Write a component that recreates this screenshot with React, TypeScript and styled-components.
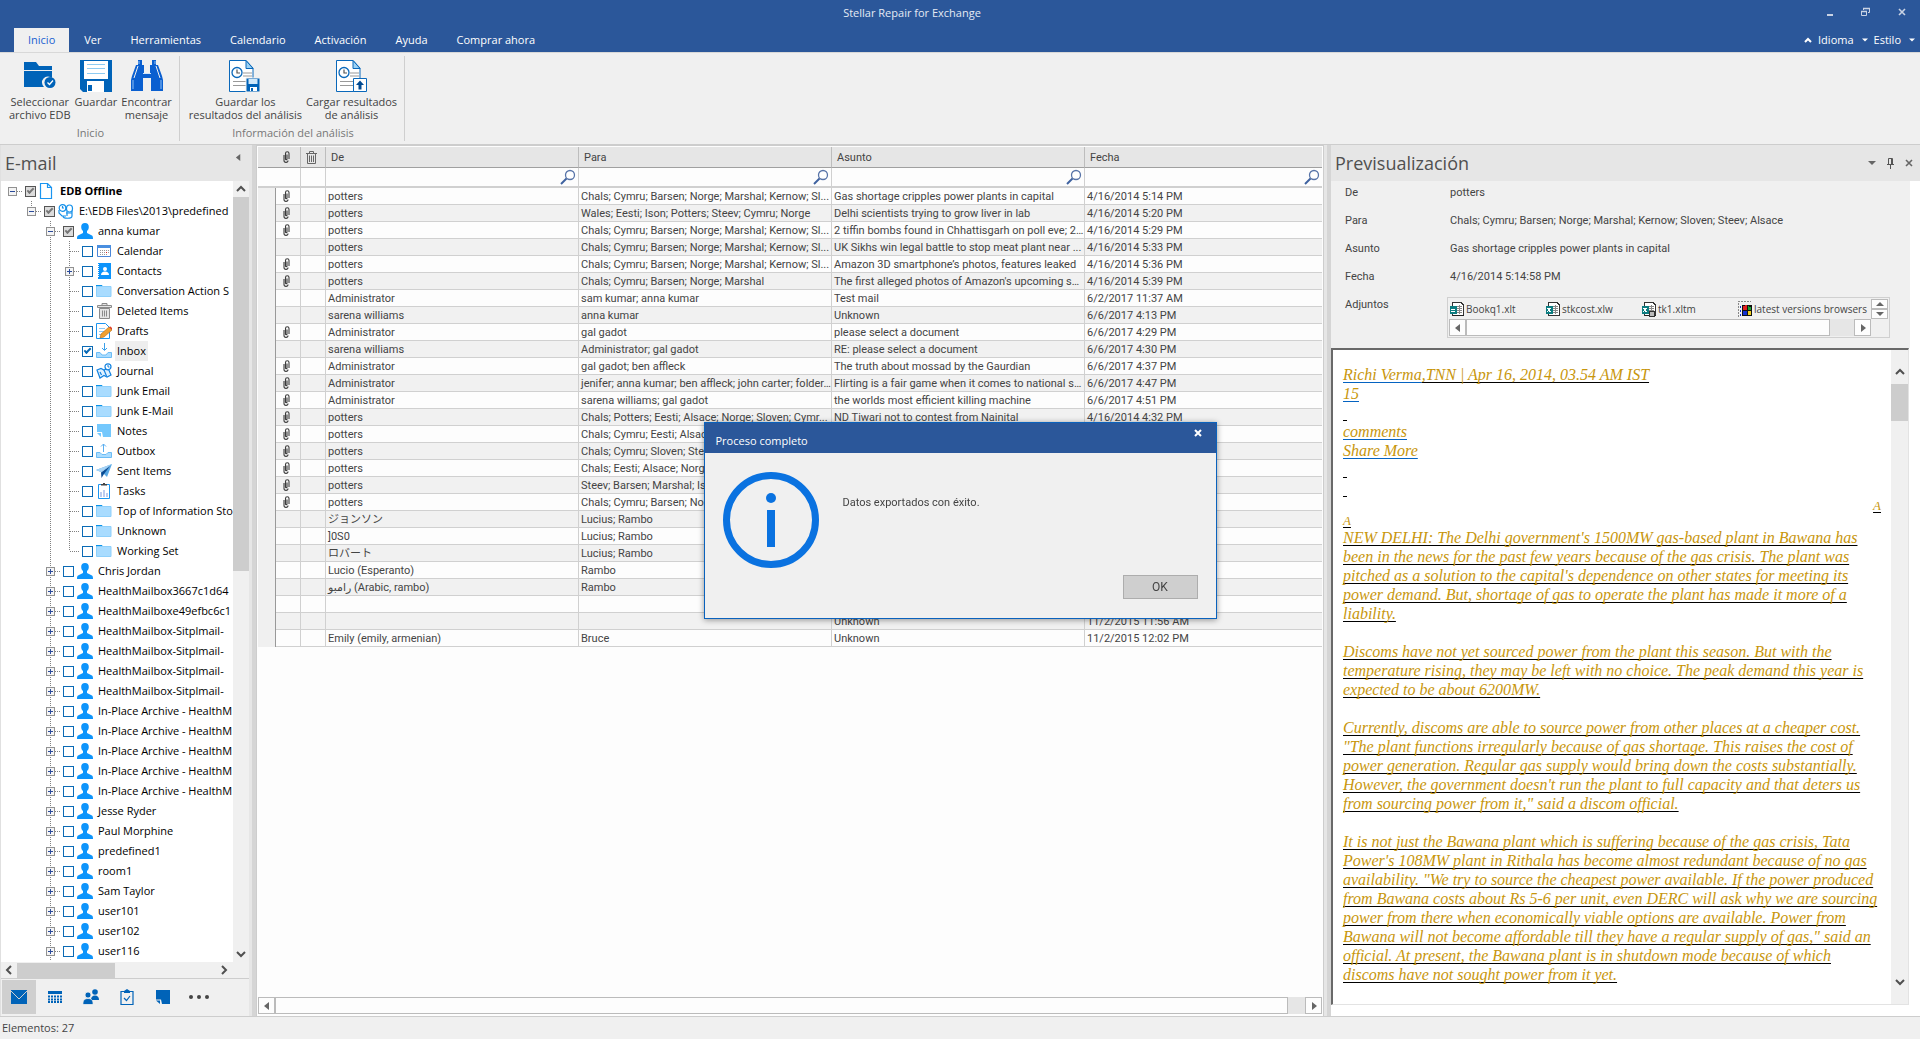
import React from 'react';
import styled, { createGlobalStyle, css } from 'styled-components';

const ui = '"Open Sans", "Noto Sans", sans-serif';
const gridFont = 'Roboto, "Liberation Sans", "Noto Sans CJK JP", "DejaVu Sans", sans-serif';
const brand = '#2b579a';
const line = '#d0d0d0';
const iconBlue = '#0063b8';

const GlobalStyle = createGlobalStyle`
  *, *::before, *::after { box-sizing: border-box; }
  body { margin: 0; background: #f0f0f0; color: #444; font: 11px/14px ${ui}; }
  button, input { font: inherit; color: inherit; margin: 0; }
  button { padding: 0; border: 0; background: none; }
  svg { display: block; flex: none; }
`;

/* ---------- shell ---------- */

const Shell = styled.div`
  display: flex;
  flex-direction: column;
  height: 100vh;
  overflow: hidden;
`;

const TitleBar = styled.header`
  display: flex;
  height: 28px;
  flex: none;
  background: ${brand};
  color: #e4eaf4;
`;

const AppTitle = styled.h1`
  flex: 1;
  margin: 0;
  padding-left: 12px;
  font: 11px/26px ${ui};
  text-align: center;
`;

const WindowButton = styled.button`
  display: grid;
  place-items: center;
  width: 36px;
  height: 24px;
`;

const TabRow = styled.nav`
  display: flex;
  align-items: stretch;
  gap: 1px;
  height: 24px;
  flex: none;
  padding: 0 5px 0 14px;
  background: ${brand};
`;

const Tab = styled.button<{ $active?: boolean }>`
  padding: 0 14px;
  line-height: 24px;
  white-space: nowrap;
  color: #fff;
  ${p => p.$active && css`
    background: #f0f0f0;
    color: #1a5fd0;
  `}
`;

const TabTools = styled.div`
  display: flex;
  align-items: center;
  gap: 6px;
  margin-left: auto;
  color: #fff;
`;

const ToolLink = styled.button`
  display: flex;
  align-items: center;
  gap: 8px;
  line-height: 24px;
`;

/* ---------- ribbon ---------- */

const Ribbon = styled.section`
  display: flex;
  flex: none;
  height: 93px;
  padding: 3px 0;
  background: #f0f0f0;
  border-top: 1px solid #d8d8d8;
  border-bottom: 1px solid #cdcdcd;
`;

const RibbonGroup = styled.div`
  display: flex;
  flex-direction: column;
  border-right: 1px solid #cfcfcf;
  padding: 4px 7px 0 9px;
`;

const RibbonButtons = styled.div`
  display: flex;
  gap: 4px;
`;

const RibbonButton = styled.button`
  display: flex;
  flex-direction: column;
  align-items: center;
  gap: 3px;
  height: 62px;
  line-height: 13px;
  white-space: nowrap;
`;

const GroupName = styled.span`
  margin-top: 4px;
  line-height: 14px;
  text-align: center;
  color: #777;
`;

/* ---------- main split ---------- */

const Main = styled.main`
  display: flex;
  flex: 1;
  min-height: 0;
`;

const Splitter = styled.div`
  flex: none;
  width: 7px;
  background: #e6e6e6;
  border-right: 4px solid #d5d5d5;
`;

const StatusBar = styled.footer`
  flex: none;
  height: 23px;
  padding: 0 2px;
  border-top: 1px solid #cdcdcd;
  background: #f0f0f0;
  line-height: 22px;
`;

/* ---------- left panel ---------- */

const SidePanel = styled.aside`
  display: flex;
  flex-direction: column;
  flex: none;
  width: 249px;
  border-left: 1px solid #e0e0e0;
  background: #f0f0f0;
`;

const PanelHeader = styled.div`
  display: flex;
  align-items: center;
  flex: none;
  height: 36px;
  padding: 0 7px 0 4px;
  background: #e6e6e6;
`;

const PanelTitle = styled.h2`
  flex: 1;
  margin: 0;
  font: 18px/36px ${ui};
  color: #505050;
`;

const CollapseButton = styled.button`
  align-self: flex-start;
  padding-top: 9px;
`;

const TreeArea = styled.div`
  display: flex;
  flex: 1;
  min-height: 0;
`;

const Tree = styled.ul`
  flex: 1;
  min-width: 0;
  margin: 0;
  padding: 0 0 0 2px;
  overflow: hidden;
  list-style: none;
  background: #fff;
  color: #000;
`;

const TreeRow = styled.li`
  display: flex;
  align-items: center;
  height: 20px;
  overflow: hidden;
`;

const TreeLabel = styled.label`
  display: flex;
  align-items: center;
  gap: 3px;
  margin-left: 3px;
`;

const IconSlot = styled.span`
  display: grid;
  place-items: center;
  width: 16px;
  height: 20px;
`;

const NodeText = styled.span<{ $bold?: boolean; $selected?: boolean }>`
  padding: 0 2px;
  line-height: 20px;
  white-space: nowrap;
  font-weight: ${p => (p.$bold ? 700 : 400)};
  background: ${p => (p.$selected ? '#eeeeee' : 'transparent')};
`;

const TreeCheck = styled.input<{ $partial?: boolean }>`
  appearance: none;
  display: grid;
  place-items: center;
  flex: none;
  width: 11px;
  height: 11px;
  border: 1px solid ${p => (p.$partial ? '#555' : '#0a6ab5')};
  background: ${p => (p.$partial ? '#dcdcdc' : '#fff')};
  &:checked::before {
    content: '';
    width: 7px;
    height: 4px;
    margin-top: -2px;
    border: solid ${p => (p.$partial ? '#777' : '#0a6ab5')};
    border-width: 0 0 2px 2px;
    rotate: -45deg;
  }
`;

const VScroll = styled.div<{ $width: number; $inset?: number }>`
  display: flex;
  flex-direction: column;
  flex: none;
  width: ${p => p.$width}px;
  padding: ${p => p.$inset ?? 0}px 0;
  background: #f0f0f0;
`;

const ScrollButton = styled.button<{ $w?: number; $h?: number }>`
  display: grid;
  place-items: center;
  flex: none;
  width: ${p => p.$w ?? 16}px;
  height: ${p => p.$h ?? 16}px;
`;

const VThumb = styled.div<{ $length: number }>`
  height: ${p => p.$length}px;
  margin-bottom: auto;
  background: #cdcdcd;
`;

const HScroll = styled.div`
  display: flex;
  align-items: center;
  flex: none;
  height: 16px;
  padding-right: 17px;
`;

const HThumb = styled.div`
  width: 98px;
  height: 15px;
  margin-right: auto;
  background: #cdcdcd;
`;

const NavBar = styled.nav`
  display: flex;
  flex: none;
  gap: 2px;
  height: 38px;
  padding: 1px;
  border-top: 1px solid #cdcdcd;
`;

const NavButton = styled.button<{ $active?: boolean }>`
  display: grid;
  place-items: center;
  width: 34px;
  height: 34px;
  background: ${p => (p.$active ? '#cfcfcf' : 'transparent')};
`;

/* ---------- message grid ---------- */

const GridPanel = styled.section`
  display: flex;
  flex-direction: column;
  flex: 1;
  min-width: 0;
  padding: 1px 1px 2px;
  border: solid #cdcdcd;
  border-width: 1px 1px 0;
  background: #fdfdfd;
`;

const MailTable = styled.table`
  width: 100%;
  table-layout: fixed;
  border-collapse: separate;
  border-spacing: 0;
  font: 11px/14px ${gridFont};
`;

const IconHead = styled.th<{ $plain?: boolean }>`
  height: 21px;
  padding: 0 3px 0 0;
  background: #e6e6e6;
  border-bottom: 1px solid #a0a0a0;
  border-right: ${p => (p.$plain ? '0' : '1px solid #bdbdbd')};
  svg { margin: 0 auto; }
`;

const TextHead = styled.th`
  height: 21px;
  padding: 2px 5px 0;
  background: #e6e6e6;
  border: solid #bdbdbd;
  border-width: 0 1px 1px 0;
  border-bottom-color: #a0a0a0;
  font-weight: 400;
  text-align: left;
  &:last-child { border-right: 0; }
`;

const FilterCell = styled.td`
  height: 20px;
  padding: 0;
  border: solid ${line};
  border-width: 0 1px 2px 0;
  &:last-child { border-right: 0; }
`;

const FilterBox = styled.label`
  display: flex;
  align-items: center;
  height: 18px;
  padding-right: 2px;
`;

const FilterInput = styled.input`
  flex: 1;
  min-width: 0;
  height: 16px;
  padding: 0 3px;
  border: 0;
  outline: 0;
  background: transparent;
`;

const BodyRow = styled.tr`
  background: #fdfdfd;
  &:nth-child(even) { background: #f1f1f1; }
`;

const Marker = styled.td`
  height: 17px;
  padding: 0;
  background: #f0f0f0;
  border-right: 1px solid #999;
`;

const Cell = styled.td`
  height: 17px;
  padding: 2px 0 0 2px;
  overflow: hidden;
  white-space: nowrap;
  text-overflow: ellipsis;
  border: solid ${line};
  border-width: 0 1px 1px 0;
  &:last-child { border-right: 0; }
`;

const ClipCell = styled(Cell)`
  padding: 0 0 0 7px;
`;

const BoxScroll = styled.div`
  display: flex;
  flex: none;
  height: 17px;
  margin-top: auto;
  background: #e6e6e6;
`;

const BoxButton = styled.button<{ $h: number }>`
  display: grid;
  place-items: center;
  flex: none;
  width: 17px;
  height: ${p => p.$h}px;
  border: 1px solid #bbb;
  background: #fdfdfd;
`;

const BoxThumb = styled.div<{ $gap: number }>`
  flex: 1;
  margin-right: ${p => p.$gap}px;
  border: 1px solid #bbb;
  background: #fdfdfd;
`;

/* ---------- preview ---------- */

const Preview = styled.section`
  display: flex;
  flex-direction: column;
  flex: none;
  width: 589px;
  background: #fff;
`;

const HeaderTools = styled.div`
  display: flex;
  align-items: center;
  gap: 10px;
`;

const Details = styled.dl`
  display: grid;
  grid-template-columns: 105px 1fr;
  grid-template-rows: repeat(4, 28px) auto;
  flex: none;
  height: 167px;
  margin: 0 10px 0 0;
  padding: 4px 20px 0 14px;
  background: #f0f0f0;
  font: 11px/15px ${gridFont};
`;

const Term = styled.dt`
  margin: 0;
`;

const Value = styled.dd`
  margin: 0;
  white-space: nowrap;
`;

const Attachments = styled.dd`
  margin: 0 0 0 -3px;
  height: 41px;
  padding: 1px;
  border: 1px solid ${line};
  font: 10px/18px ${ui};
`;

const AttachRow = styled.div`
  display: flex;
  height: 20px;
`;

const AttachList = styled.ul`
  display: grid;
  grid-template-columns: repeat(3, 96px) 1fr;
  flex: 1;
  min-width: 0;
  margin: 0;
  padding: 0;
  list-style: none;
`;

const Attachment = styled.li`
  display: flex;
  align-items: center;
  gap: 2px;
  min-width: 0;
  white-space: nowrap;
`;

const Spinner = styled.div`
  display: flex;
  flex-direction: column;
  width: 17px;
`;

const AttachScroll = styled.div`
  display: flex;
  height: 17px;
  padding-right: 17px;
  background: #e6e6e6;
  background-clip: content-box;
`;

const Message = styled.div`
  display: flex;
  flex: 1;
  min-height: 0;
  margin: 0 11px 11px 0;
  border: solid #696969;
  border-width: 2px 1px 1px 2px;
  border-right-color: #e3e3e3;
  border-bottom-color: #e3e3e3;
`;

const MessageBody = styled.article`
  flex: 1;
  min-width: 0;
  padding: 15px 10px 0 10px;
  overflow: hidden;
  color: #c8960c;
  font: italic 16px/19px "Liberation Serif", serif;
  white-space: nowrap;
`;

const Paragraph = styled.p`
  margin: 0 0 19px;
  text-decoration: underline 1px #000;
  text-underline-offset: 2px;
  text-decoration-skip-ink: none;
`;

const Plain = styled.p`
  margin: 0;
`;

const Mark = styled.span<{ $blue?: boolean }>`
  text-decoration: underline 1px ${p => (p.$blue ? '#0563c1' : '#000')};
  text-underline-offset: 2px;
  text-decoration-skip-ink: none;
`;

const SmallLine = styled(Plain)<{ $right?: boolean }>`
  font-size: 13px;
  line-height: 15px;
  text-align: ${p => (p.$right ? 'right' : 'left')};
`;

/* ---------- dialog ---------- */

const Overlay = styled.div`
  position: fixed;
  inset: 0;
  display: grid;
  place-items: center;
  padding-top: 2px;
`;

const Dialog = styled.div`
  display: flex;
  flex-direction: column;
  width: 513px;
  height: 197px;
  border: 1px solid #0a62bd;
  background: #f0f0f0;
  box-shadow: 0 1px 6px rgba(0, 0, 0, 0.4);
`;

const DialogHeader = styled.div`
  display: flex;
  justify-content: space-between;
  align-items: flex-start;
  height: 30px;
  padding: 0 12px 0 11px;
  background: ${brand};
  color: #fff;
`;

const DialogTitle = styled.h2`
  margin: 0;
  padding-top: 9px;
  font: 11px/18px ${ui};
`;

const CloseButton = styled.button`
  display: grid;
  place-items: center;
  width: 12px;
  height: 20px;
`;

const DialogBody = styled.div`
  display: flex;
  flex: 1;
  gap: 24px;
  padding: 19px 18px 0;
`;

const DialogText = styled.p`
  margin: 0;
  padding-top: 24px;
  font: 11px/14px ${gridFont};
`;

const DialogFooter = styled.div`
  display: flex;
  justify-content: flex-end;
  padding: 0 18px 19px;
`;

const OkButton = styled.button`
  width: 75px;
  height: 24px;
  border: 1px solid #adadad;
  background: #cfcfcf;
  font: 12px/20px ${gridFont};
`;

/* ---------- icons ---------- */

const Triangle = ({ dir, color = '#666', size = 8 }: { dir: 'l' | 'r' | 'u' | 'd'; color?: string; size?: number }) => {
  const d = { l: 'M6 0 L1 4 L6 8Z', r: 'M2 0 L7 4 L2 8Z', u: 'M0 6 L4 2 L8 6Z', d: 'M0 2 L8 2 L4 6Z' }[dir];
  return <svg width={size} height={size} viewBox="0 0 8 8"><path d={d} fill={color} /></svg>;
};

const Chevron = ({ dir }: { dir: 'l' | 'r' | 'u' | 'd' }) => {
  const d = { l: 'M7 1 L3 5 L7 9', r: 'M3 1 L7 5 L3 9', u: 'M1 7 L5 3 L9 7', d: 'M1 3 L5 7 L9 3' }[dir];
  return <svg width="10" height="10" viewBox="0 0 10 10"><path d={d} fill="none" stroke="#505050" strokeWidth="2" /></svg>;
};

const FolderBig = () => (
  <svg width="32" height="32" viewBox="0 0 32 32">
    <path d="M0 2h12l3 4h13v4H0z M0 11h28v7a6 6 0 0 0-8 9H0z" fill={iconBlue} />
    <circle cx="26" cy="22.500" r="5.500" fill={iconBlue} />
    <path d="M23.500 22.500l2 2 3.500-4" fill="none" stroke="#fff" strokeWidth="1.300" />
  </svg>
);

const SaveBig = () => (
  <svg width="32" height="32" viewBox="0 0 32 32">
    <path d="M0 0h32v32H3l-3-3z" fill={iconBlue} />
    <path d="M4 1h24v18H4z M7 21h17v11H7z" fill="#fff" />
    <path d="M7 4.500h18M7 8.500h18M7 13.500h18" stroke="#8ecbf2" />
    <path d="M8 25h4v6H8z" fill={iconBlue} />
  </svg>
);

const Binoculars = () => (
  <svg width="32" height="32" viewBox="0 0 32 32">
    <path d="M7 0h4v5h2v8h6V5h2V0h4v5h2l4 11 1 4v11H20V18h-8v13H0V20l1-4L5 5h2z" fill="#0a5fd0" />
    <path d="M7 6l-4 12M25 6l4 12" stroke="#f0f0f0" />
    <path d="M2 20v9M30 20v9M8 1v3M24 1v3" stroke="#8fc1f5" />
    <path d="M12 13h8v1h-8z" fill="#cfe4fb" />
  </svg>
);

const ReportBase = ({ children }: { children: React.ReactNode }) => (
  <svg width="32" height="32" viewBox="0 0 32 32">
    <path d="M.5 .5H17l7 7.500v23.500H.5z" fill="#fff" stroke="#0a68ba" />
    <path d="M17 .5v8h7z" fill="#9cd2f5" stroke="#0a68ba" />
    <path d="M14 13h9M14 16h9M4 21.500h15M4 25.500h13" stroke="#999" />
    <circle cx="8" cy="12.500" r="5" fill="#fff" stroke="#0a68ba" strokeWidth="1.300" />
    <path d="M8 9.500v3.500h3" fill="none" stroke="#555" strokeWidth="1.200" />
    {children}
  </svg>
);

const ReportSave = () => (
  <ReportBase>
    <path d="M17 18h14v14H17z" fill={iconBlue} stroke="#f0f0f0" />
    <path d="M19.500 19h9v5h-9z" fill="#cfe8fa" />
    <path d="M21 27h7v4h-7z" fill="#fff" />
    <path d="M22 28h2v3h-2z" fill={iconBlue} />
  </ReportBase>
);

const ReportLoad = () => (
  <ReportBase>
    <path d="M17.500 18.500h13v13h-13z" fill="#fff" stroke="#0a68ba" />
    <path d="M24 20.500l4 4.500h-2.500v4.500h-3V25H20z" fill="#004a92" />
  </ReportBase>
);

const Clip = () => (
  <svg width="7" height="12" viewBox="0 0 7 12">
    <path d="M1 4v5.500c0 2.500 4 2.500 4 0M6 8V2.500C6 .2 2.500 .2 2.500 2.500V8c0 1 1.500 1 1.500 0V3.500" fill="none" stroke="#3c3c3c" strokeWidth="1.100" />
  </svg>
);

const TrashHead = () => (
  <svg width="11" height="13" viewBox="0 0 11 13">
    <path d="M0 2.500h11M3.500 2V.5h4V2M1.500 3v9.500h8V3M3.500 4.500v6.500M5.500 4.500v6.500M7.500 4.500v6.500" fill="none" stroke="#666" />
  </svg>
);

const Magnifier = () => (
  <svg width="16" height="16" viewBox="0 0 16 16">
    <circle cx="10" cy="6" r="4.500" fill="#fff" stroke="#5874a8" strokeWidth="1.300" />
    <path d="M6.500 9.500L1 15" stroke="#3f62a0" strokeWidth="2" />
  </svg>
);

type IconName = 'doc' | 'db' | 'user' | 'calendar' | 'contacts' | 'folder' | 'trash' | 'drafts' | 'inbox'
  | 'journal' | 'note' | 'outbox' | 'sent' | 'tasks';

const treeArt: Record<IconName, React.ReactNode> = {
  doc: <path d="M1.500 .5h7l4 4v11h-11zM8.500 .5v4h4" fill="#fff" stroke="#1b95f0" strokeWidth="1.200" />,
  db: (
    <g fill="#fff" stroke="#1490ea" strokeWidth="1.200">
      <path d="M1 7v3l3 3h4M5 13c0 3 9 3 9 0V6H9v7" />
      <ellipse cx="11.500" cy="5.500" rx="3" ry="3.500" />
      <circle cx="4.500" cy="5" r="3.300" />
      <path d="M4.500 3v2H6M8 10h6" fill="none" />
    </g>
  ),
  user: <path d="M8 0c2.500 0 3.800 1.600 3.800 4 0 2-.8 3.200-1.800 4v2l5 2.500c.8.500 1 1.500 1 3.500H0c0-2 .2-3 1-3.500L6 10V8C5 7.200 4.200 6 4.200 4 4.200 1.600 5.500 0 8 0z" fill="#0d94fb" />,
  calendar: (
    <g>
      <path d="M1.500 2.500h13v11h-13z" fill="#fff" stroke="#4a86d8" />
      <path d="M1 2h14v3H1z" fill="#4a8fe0" />
      <path d="M4 7.500h9M4 9.500h9M4 11.500h7" stroke="#999" strokeDasharray="1 1" />
      <path d="M10 9h1v1h-1z" fill="#e02020" />
    </g>
  ),
  contacts: (
    <g>
      <path d="M2 0h13v16H2z" fill="#0d94fb" />
      <path d="M2.500 1v14" stroke="#fff" strokeDasharray="1 1" />
      <circle cx="9" cy="6" r="2" fill="#fff" />
      <path d="M5 12c0-2 1.500-3.500 4-3.500s4 1.500 4 3.500z" fill="#fff" />
    </g>
  ),
  folder: (
    <g>
      <path d="M0 2h6l1 2H0z" fill="#0d94e8" />
      <path d="M.5 3.500h14.500v10H.5z" fill="#a9dcff" stroke="#8fd0fb" />
    </g>
  ),
  trash: (
    <g fill="#e4e4e4" stroke="#8a8a8a">
      <path d="M3.500 5.500h10v10h-10z M1.500 2.500h14v2h-14z M6 2.500v-2h5v2" />
      <path d="M6.500 7.500v6M8.500 7.500v6M10.500 7.500v6" />
    </g>
  ),
  drafts: (
    <g>
      <path d="M.5 .5h9l4 4v11H.5z" fill="#fff" stroke="#1b95f0" />
      <path d="M3 5.500h6M3 8.500h6M3 11.500h3" stroke="#8ec8f2" />
      <path d="M4 15l1-4 8-7 3 3-8 7z" fill="#f0a030" stroke="#b86a10" strokeWidth=".6" />
      <path d="M13 4l3 3 .500-1.500-2-2z" fill="#e03c28" />
    </g>
  ),
  inbox: (
    <g>
      <path d="M.5 9.500H4l2 2.500h4l2-2.500h3.500v5H.5z" fill="#a9dcff" stroke="#6cbcf5" />
      <path d="M8.500 0v7M6 5l2.500 2.500L11 5" fill="none" stroke="#3aa0ea" />
    </g>
  ),
  journal: (
    <g fill="#dff1ff" stroke="#1483e0" strokeWidth="1.200">
      <path d="M1 7l4-1.500L8 7l4-2 3 7-4 2-3-1.500L4 15z" />
      <path d="M4 9l1.500 3M8 7l2.500 6" />
      <circle cx="12" cy="3.800" r="3" fill="#fff" />
      <path d="M12 2v2h1.500" fill="none" strokeWidth="1" />
    </g>
  ),
  note: (
    <g>
      <path d="M1 1h14v13H7l-1-5H1z" fill="#74c8fd" />
      <path d="M1 10h4v4z" fill="#74c8fd" />
    </g>
  ),
  outbox: (
    <g>
      <path d="M.5 9.500H4l2 2h4l2-2h3.500v5H.5z" fill="#a9dcff" stroke="#6cbcf5" />
      <path d="M7.500 9V1M5 3.500L7.500 1 10 3.500" fill="none" stroke="#5aaef0" />
    </g>
  ),
  sent: (
    <g>
      <path d="M0 7L16 1 11 14 7 10 14 3 5 9z" fill="#58a8e4" />
      <path d="M14 3L5 9.500 5.500 15 8 11z" fill="#0a4c94" />
      <path d="M0 7L16 1 5 9z" fill="#a8d4f6" />
    </g>
  ),
  tasks: (
    <g>
      <path d="M2.500 1.500h11v14h-11z" fill="#fff" stroke="#1b95f0" />
      <path d="M5 2.500V1h2V0h2v1h2v1.500z" fill="#444" />
      <path d="M4 9h2v5H4zM7 7h2v7H7zM10 10h2v4h-2z" fill="#bccbf0" />
    </g>
  ),
};

const TreeIcon = ({ name }: { name: IconName }) => (
  <svg width="16" height="16" viewBox="0 0 16 16">{treeArt[name]}</svg>
);

/* Dotted connector cell of the tree; the box carries + or − */
const Guide = ({ pass, up, down, dash, box }: { pass?: boolean; up?: boolean; down?: boolean; dash?: boolean; box?: '+' | '-' }) => {
  const wide = dash ? 22 : 19;
  return (
    <svg width={wide} height="20" viewBox={`0 0 ${wide} 20`} shapeRendering="crispEdges">
      <g stroke="#808080" strokeDasharray="1 1">
        {(pass || up) && <path d="M9.500 0v10" />}
        {(pass || down) && <path d="M9.500 10v10" />}
        {dash && <path d="M10 10.500h10" />}
      </g>
      {box && (
        <g>
          <rect x="5.500" y="6.500" width="8" height="8" rx="1" fill="#f4f4f4" stroke="#919191" />
          <path d={box === '+' ? 'M7 10.500h5M9.500 8v5' : 'M7 10.500h5'} stroke="#2a4a9a" />
        </g>
      )}
    </svg>
  );
};

/* ---------- data ---------- */

interface TreeNode {
  text: string;
  level: number;
  icon: IconName;
  box?: '+' | '-';
  state?: 'on' | 'partial';
  last?: boolean;
  selected?: boolean;
}

const folder = (text: string, icon: IconName = 'folder', extra: Partial<TreeNode> = {}): TreeNode =>
  ({ text, icon, level: 3, ...extra });
const mailbox = (text: string): TreeNode => ({ text, icon: 'user', level: 2, box: '+' });

const nodes: TreeNode[] = [
  { text: 'EDB Offline', level: 0, icon: 'doc', box: '-', state: 'partial' },
  { text: 'E:\\EDB Files\\2013\\predefined', level: 1, icon: 'db', box: '-', state: 'partial' },
  { text: 'anna kumar', level: 2, icon: 'user', box: '-', state: 'partial' },
  folder('Calendar', 'calendar'),
  folder('Contacts', 'contacts', { box: '+' }),
  folder('Conversation Action S'),
  folder('Deleted Items', 'trash'),
  folder('Drafts', 'drafts'),
  folder('Inbox', 'inbox', { state: 'on', selected: true }),
  folder('Journal', 'journal'),
  folder('Junk Email'),
  folder('Junk E-Mail'),
  folder('Notes', 'note'),
  folder('Outbox', 'outbox'),
  folder('Sent Items', 'sent'),
  folder('Tasks', 'tasks'),
  folder('Top of Information Sto'),
  folder('Unknown'),
  folder('Working Set', 'folder', { last: true }),
  ...['Chris Jordan', 'HealthMailbox3667c1d64', 'HealthMailboxe49efbc6c1', 'HealthMailbox-Sitplmail-',
    'HealthMailbox-Sitplmail-', 'HealthMailbox-Sitplmail-', 'HealthMailbox-Sitplmail-',
    'In-Place Archive - HealthM', 'In-Place Archive - HealthM', 'In-Place Archive - HealthM',
    'In-Place Archive - HealthM', 'In-Place Archive - HealthM', 'Jesse Ryder', 'Paul Morphine',
    'predefined1', 'room1', 'Sam Taylor', 'user101', 'user102', 'user116'].map(mailbox),
];

type Mail = [clip: boolean, from: string, to: string, subject: string, date: string];
const recipients = 'Chals; Cymru; Barsen; Norge; Marshal; Kernow; Sloven; Steev; Alsace';
const many = 'Chals; Cymru; Barsen; Norge; Marshal; Kernow; Sl...';

const mails: Mail[] = [
  [true, 'potters', many, 'Gas shortage cripples power plants in capital', '4/16/2014 5:14 PM'],
  [true, 'potters', 'Wales; Eesti; Ison; Potters; Steev; Cymru; Norge', 'Delhi scientists trying to grow liver in lab', '4/16/2014 5:20 PM'],
  [true, 'potters', many, '2 tiffin bombs found in Chhattisgarh on poll eve; 2 ...', '4/16/2014 5:29 PM'],
  [false, 'potters', many, 'UK Sikhs win legal battle to stop meat plant near ...', '4/16/2014 5:33 PM'],
  [true, 'potters', many, 'Amazon 3D smartphone’s photos, features leaked', '4/16/2014 5:36 PM'],
  [true, 'potters', 'Chals; Cymru; Barsen; Norge; Marshal', 'The first alleged photos of Amazon\'s upcoming sm...', '4/16/2014 5:39 PM'],
  [false, 'Administrator', 'sam kumar; anna kumar', 'Test mail', '6/2/2017 11:37 AM'],
  [false, 'sarena williams', 'anna kumar', 'Unknown', '6/6/2017 4:13 PM'],
  [true, 'Administrator', 'gal gadot', 'please select a document', '6/6/2017 4:29 PM'],
  [false, 'sarena williams', 'Administrator; gal gadot', 'RE: please select a document', '6/6/2017 4:30 PM'],
  [true, 'Administrator', 'gal gadot; ben affleck', 'The truth about mossad by the Gaurdian', '6/6/2017 4:37 PM'],
  [true, 'Administrator', 'jenifer; anna kumar; ben affleck; john carter; folder...', 'Flirting is a fair game when it comes to national se...', '6/6/2017 4:47 PM'],
  [true, 'Administrator', 'sarena williams; gal gadot', 'the worlds most efficient killing machine', '6/6/2017 4:51 PM'],
  [true, 'potters', 'Chals; Potters; Eesti; Alsace; Norge; Sloven; Cymr...', 'ND Tiwari not to contest from Nainital', '4/16/2014 4:32 PM'],
  [true, 'potters', 'Chals; Cymru; Eesti; Alsace', '', ''],
  [true, 'potters', 'Chals; Cymru; Sloven; Steev', '', ''],
  [true, 'potters', 'Chals; Eesti; Alsace; Norge', '', ''],
  [true, 'potters', 'Steev; Barsen; Marshal; Ison', '', ''],
  [true, 'potters', 'Chals; Cymru; Barsen; Norge', '', ''],
  [false, 'ジョンソン', 'Lucius; Rambo', '', ''],
  [false, ']0S0', 'Lucius; Rambo', '', ''],
  [false, 'ロバート', 'Lucius; Rambo', '', ''],
  [false, 'Lucio (Esperanto)', 'Rambo', '', ''],
  [false, 'رامبو (Arabic, rambo)', 'Rambo', '', ''],
  [false, '', '', '', ''],
  [false, '', '', 'Unknown', '11/2/2015 11:56 AM'],
  [false, 'Emily (emily, armenian)', 'Bruce', 'Unknown', '11/2/2015 12:02 PM'],
];

const paragraphs = [
  ['NEW DELHI: The Delhi government\'s 1500MW gas-based plant in Bawana has',
    'been in the news for the past few years because of the gas crisis. The plant was',
    'pitched as a solution to the capital\'s dependence on other states for meeting its',
    'power demand. But, shortage of gas to operate the plant has made it more of a',
    'liability.'],
  ['Discoms have not yet sourced power from the plant this season. But with the',
    'temperature rising, they may be left with no choice. The peak demand this year is',
    'expected to be about 6200MW.'],
  ['Currently, discoms are able to source power from other places at a cheaper cost.',
    '"The plant functions irregularly because of gas shortage. This raises the cost of',
    'power generation. Regular gas supply would bring down the costs substantially.',
    'However, the government doesn\'t run the plant to full capacity and that deters us',
    'from sourcing power from it," said a discom official.'],
  ['It is not just the Bawana plant which is suffering because of the gas crisis, Tata',
    'Power\'s 108MW plant in Rithala has become almost redundant because of no gas',
    'availability. "We try to source the cheapest power available. If the power produced',
    'from Bawana costs about Rs 5-6 per unit, even DERC will ask why we are sourcing',
    'power from there when economically viable options are available. Power from',
    'Bawana will not become affordable till they have a regular supply of gas," said an',
    'official. At present, the Bawana plant is in shutdown mode because of which',
    'discoms have not sought power from it yet.'],
];

/* ---------- parts ---------- */

const TreeItem = ({ node, id }: { node: TreeNode; id: string }) => (
  <TreeRow>
    {Array.from({ length: node.level }, (_, i) => <Guide key={i} pass={node.level === 3 && i === 2} />)}
    <Guide
      dash
      pass={node.level === 2 ? id !== 'node-2' : node.level === 3 && !node.last}
      up={node.level > 0}
      down={id === 'node-2'}
      box={node.box}
    />
    <TreeCheck type="checkbox" id={id} defaultChecked={!!node.state} $partial={node.state === 'partial'} />
    <TreeLabel htmlFor={id}>
      <IconSlot><TreeIcon name={node.icon} /></IconSlot>
      <NodeText $bold={node.level === 0} $selected={node.selected}>{node.text}</NodeText>
    </TreeLabel>
  </TreeRow>
);

const FileIcon = ({ kind }: { kind: 'xlt' | 'xlw' | 'xltm' | 'zip' }) => (
  <svg width="15" height="16" viewBox="0 0 14 16" shapeRendering="crispEdges">
    {kind === 'zip' ? (
      <g>
        <path d="M.5 15.500V.5h13" fill="none" stroke="#888" strokeDasharray="2 1" />
        <path d="M4 4h10v11H4z" fill="#111" />
        <path d="M5 5l4-1v5H5z" fill="#e02020" />
        <path d="M10 5l3 1v3h-3z" fill="#18a030" />
        <path d="M5 10h4v4H5z" fill="#1030d0" />
        <path d="M10 10h3v4h-3z" fill="#f0d020" />
        <path d="M2 5h1v2H2zM2 9h1v2H2zM2 13h1v2H2z" fill="#1030d0" />
      </g>
    ) : (
      <g>
        <path d="M2.500 1.500h9l2 2v11h-11z" fill="#fff" stroke="#333" />
        <path d="M7 5.500h5M7 7.500h5M7 9.500h5M7 11.500h5M9.500 4v9" stroke="#888" />
        <path d="M0 5h7v8H0z" fill="#0c7c80" />
        <path d={kind === 'xlt' ? 'M1.500 8h4M1.500 10h4' : 'M2 7l3 4M5 7l-3 4'} stroke="#fff" />
        {kind !== 'xlw' && <path d="M3 14h11v1H3z" fill="#222" />}
        {kind === 'xltm' && <path d="M8 10h5v5H8z" fill="#bbb" stroke="#333" />}
      </g>
    )}
  </svg>
);

const NavIcon = ({ kind }: { kind: 'mail' | 'cal' | 'people' | 'task' | 'note' | 'more' }) => (
  <svg width="20" height="16" viewBox="0 0 20 16" fill={iconBlue}>
    {kind === 'mail' && <g><path d="M2 1h16v14H2z" /><path d="M2 2l8 8 8-8" fill="none" stroke="#cfcfcf" /></g>}
    {kind === 'cal' && (
      <g><path d="M3 2h14v3H3z" /><path d="M3 7.500h14M3 10.500h14M3 13h14" stroke={iconBlue} strokeWidth="2" strokeDasharray="2 1" /></g>
    )}
    {kind === 'people' && (
      <g>
        <circle cx="14" cy="3" r="2.800" /><path d="M10 11c0-3 1.500-4.500 4-4.500s4 1.500 4 4.500z" />
        <g stroke="#f0f0f0" strokeWidth=".8"><circle cx="7" cy="6" r="3" /><path d="M2 15.500c-.5-4 1.500-6 5-6s5.500 2 5 6z" /></g>
      </g>
    )}
    {kind === 'task' && (
      <g fill="none" stroke={iconBlue} strokeWidth="1.200">
        <path d="M7 2.500H4v13h12v-13h-3M7 9l2.500 2.500L13 7" /><path d="M7 4V2l3-2 3 2v2z" fill={iconBlue} stroke="none" />
      </g>
    )}
    {kind === 'note' && <g><path d="M3 1h14v14H9l-1-4.500H3z" /><path d="M3 11.500h4V15z" /></g>}
    {kind === 'more' && <g fill="#444"><circle cx="2" cy="8" r="2" /><circle cx="10" cy="8" r="2" /><circle cx="18" cy="8" r="2" /></g>}
  </svg>
);

const columns = ['De', 'Para', 'Asunto', 'Fecha'];

export default function App() {
  return (
    <>
      <GlobalStyle />
      <Shell>
        <TitleBar>
          <AppTitle>Stellar Repair for Exchange</AppTitle>
          <WindowButton aria-label="Minimizar">
            <svg width="10" height="10"><path d="M2 7h6v2H2z" fill="#c9d3e4" /></svg>
          </WindowButton>
          <WindowButton aria-label="Restaurar">
            <svg width="10" height="10" fill="none" stroke="#c9d3e4"><path d="M2.500 3V1.500h6v4H7M.5 4.500h5v4h-5z" /><path d="M2 1.500h7M0 4.500h6" strokeWidth="1.500" /></svg>
          </WindowButton>
          <WindowButton aria-label="Cerrar">
            <svg width="10" height="10"><path d="M2 2l6 6M8 2L2 8" stroke="#c9d3e4" strokeWidth="1.600" /></svg>
          </WindowButton>
        </TitleBar>
        <TabRow>
          <Tab $active>Inicio</Tab>
          {['Ver', 'Herramientas', 'Calendario', 'Activación', 'Ayuda', 'Comprar ahora'].map(t => <Tab key={t}>{t}</Tab>)}
          <TabTools>
            <svg width="8" height="8"><path d="M1 6l3-3 3 3" fill="none" stroke="#fff" strokeWidth="2" /></svg>
            <ToolLink>Idioma <Triangle dir="d" color="#fff" size={6} /></ToolLink>
            <ToolLink>Estilo <Triangle dir="d" color="#fff" size={6} /></ToolLink>
          </TabTools>
        </TabRow>

        <Ribbon>
          <RibbonGroup>
            <RibbonButtons>
              <RibbonButton><FolderBig /><span>Seleccionar<br />archivo EDB</span></RibbonButton>
              <RibbonButton><SaveBig /><span>Guardar</span></RibbonButton>
              <RibbonButton><Binoculars /><span>Encontrar<br />mensaje</span></RibbonButton>
            </RibbonButtons>
            <GroupName>Inicio</GroupName>
          </RibbonGroup>
          <RibbonGroup>
            <RibbonButtons>
              <RibbonButton><ReportSave /><span>Guardar los<br />resultados del análisis</span></RibbonButton>
              <RibbonButton><ReportLoad /><span>Cargar resultados<br />de análisis</span></RibbonButton>
            </RibbonButtons>
            <GroupName>Información del análisis</GroupName>
          </RibbonGroup>
        </Ribbon>

        <Main>
          <SidePanel>
            <PanelHeader>
              <PanelTitle>E-mail</PanelTitle>
              <CollapseButton aria-label="Contraer panel"><Triangle dir="l" size={7} /></CollapseButton>
            </PanelHeader>
            <TreeArea>
              <Tree>
                {nodes.map((n, i) => <TreeItem key={i} node={n} id={`node-${i}`} />)}
              </Tree>
              <VScroll $width={16}>
                <ScrollButton aria-label="Subir"><Chevron dir="u" /></ScrollButton>
                <VThumb $length={374} />
                <ScrollButton aria-label="Bajar"><Chevron dir="d" /></ScrollButton>
              </VScroll>
            </TreeArea>
            <HScroll>
              <ScrollButton aria-label="Izquierda"><Chevron dir="l" /></ScrollButton>
              <HThumb />
              <ScrollButton aria-label="Derecha"><Chevron dir="r" /></ScrollButton>
            </HScroll>
            <NavBar>
              <NavButton $active aria-label="Correo"><NavIcon kind="mail" /></NavButton>
              <NavButton aria-label="Calendario"><NavIcon kind="cal" /></NavButton>
              <NavButton aria-label="Contactos"><NavIcon kind="people" /></NavButton>
              <NavButton aria-label="Tareas"><NavIcon kind="task" /></NavButton>
              <NavButton aria-label="Notas"><NavIcon kind="note" /></NavButton>
              <NavButton aria-label="Más"><NavIcon kind="more" /></NavButton>
            </NavBar>
          </SidePanel>
          <Splitter />

          <GridPanel>
            <MailTable>
              <colgroup>
                <col style={{ width: 18 }} />
                <col style={{ width: 25 }} />
                <col style={{ width: 25 }} />
                <col style={{ width: 253 }} />
                <col style={{ width: 253 }} />
                <col style={{ width: 253 }} />
                <col />
              </colgroup>
              <thead>
                <tr>
                  <IconHead $plain />
                  <IconHead aria-label="Adjunto"><Clip /></IconHead>
                  <IconHead aria-label="Eliminado"><TrashHead /></IconHead>
                  {columns.map(c => <TextHead key={c}>{c}</TextHead>)}
                </tr>
                <tr>
                  <FilterCell colSpan={2} />
                  <FilterCell />
                  {columns.map(c => (
                    <FilterCell key={c}>
                      <FilterBox>
                        <FilterInput type="text" aria-label={`Filtrar ${c}`} />
                        <Magnifier />
                      </FilterBox>
                    </FilterCell>
                  ))}
                </tr>
              </thead>
              <tbody>
                {mails.map(([clip, from, to, subject, date], i) => (
                  <BodyRow key={i}>
                    <Marker />
                    <ClipCell>{clip && <Clip />}</ClipCell>
                    <Cell />
                    <Cell>{from}</Cell>
                    <Cell>{to}</Cell>
                    <Cell>{subject}</Cell>
                    <Cell>{date}</Cell>
                  </BodyRow>
                ))}
              </tbody>
            </MailTable>
            <BoxScroll>
              <BoxButton $h={17} aria-label="Izquierda"><Triangle dir="l" /></BoxButton>
              <BoxThumb $gap={17} />
              <BoxButton $h={17} aria-label="Derecha"><Triangle dir="r" /></BoxButton>
            </BoxScroll>
          </GridPanel>
          <Splitter />

          <Preview>
            <PanelHeader>
              <PanelTitle>Previsualización</PanelTitle>
              <HeaderTools>
                <button aria-label="Opciones"><Triangle dir="d" /></button>
                <button aria-label="Anclar">
                  <svg width="9" height="11"><path d="M2.500 6V.5h4V6M1 6.500h7M4.500 7v4M5.500 1v5" fill="none" stroke="#555" /></svg>
                </button>
                <button aria-label="Cerrar panel">
                  <svg width="8" height="8"><path d="M1 1l6 6M7 1L1 7" stroke="#666" strokeWidth="1.600" /></svg>
                </button>
              </HeaderTools>
            </PanelHeader>
            <Details>
              <Term>De</Term><Value>potters</Value>
              <Term>Para</Term><Value>{recipients}</Value>
              <Term>Asunto</Term><Value>Gas shortage cripples power plants in capital</Value>
              <Term>Fecha</Term><Value>4/16/2014 5:14:58 PM</Value>
              <Term>Adjuntos</Term>
              <Attachments>
                <AttachRow>
                  <AttachList>
                    <Attachment><FileIcon kind="xlt" />Bookq1.xlt</Attachment>
                    <Attachment><FileIcon kind="xlw" />stkcost.xlw</Attachment>
                    <Attachment><FileIcon kind="xltm" />tk1.xltm</Attachment>
                    <Attachment><FileIcon kind="zip" />latest versions browsers</Attachment>
                  </AttachList>
                  <Spinner>
                    <BoxButton $h={10} aria-label="Anterior"><Triangle dir="u" /></BoxButton>
                    <BoxButton $h={10} aria-label="Siguiente"><Triangle dir="d" /></BoxButton>
                  </Spinner>
                </AttachRow>
                <AttachScroll>
                  <BoxButton $h={17} aria-label="Izquierda"><Triangle dir="l" /></BoxButton>
                  <BoxThumb $gap={24} />
                  <BoxButton $h={17} aria-label="Derecha"><Triangle dir="r" /></BoxButton>
                </AttachScroll>
              </Attachments>
            </Details>
            <Message>
              <MessageBody>
                <Plain><Mark $blue>Richi Verma</Mark><Mark>,TNN | Apr 16, 2014, 03.54 AM IST</Mark></Plain>
                <Plain><Mark $blue>15</Mark></Plain>
                <Plain><Mark>&nbsp;</Mark></Plain>
                <Plain><Mark $blue>comments</Mark></Plain>
                <Plain><Mark $blue>Share More</Mark></Plain>
                <Plain><Mark>&nbsp;</Mark></Plain>
                <Plain><Mark>&nbsp;</Mark></Plain>
                <SmallLine $right><Mark>A</Mark></SmallLine>
                <SmallLine><Mark>A</Mark></SmallLine>
                {paragraphs.map((lines, i) => (
                  <Paragraph key={i}>
                    {lines.map((l, j) => <React.Fragment key={j}>{j > 0 && <br />}{l}</React.Fragment>)}
                  </Paragraph>
                ))}
              </MessageBody>
              <VScroll $width={17} $inset={10}>
                <ScrollButton $w={17} $h={24} aria-label="Subir"><Chevron dir="u" /></ScrollButton>
                <VThumb $length={37} />
                <ScrollButton $w={17} $h={24} aria-label="Bajar"><Chevron dir="d" /></ScrollButton>
              </VScroll>
            </Message>
          </Preview>
        </Main>
        <StatusBar>Elementos: 27</StatusBar>
      </Shell>

      <Overlay>
        <Dialog role="dialog" aria-labelledby="dialog-title">
          <DialogHeader>
            <DialogTitle id="dialog-title">Proceso completo</DialogTitle>
            <CloseButton aria-label="Cerrar">
              <svg width="8" height="8"><path d="M1 1l6 6M7 1L1 7" stroke="#fff" strokeWidth="2" /></svg>
            </CloseButton>
          </DialogHeader>
          <DialogBody>
            <svg width="96" height="96" viewBox="0 0 96 96">
              <circle cx="48" cy="48" r="44.500" fill="none" stroke="#0a72e0" strokeWidth="7" />
              <circle cx="48" cy="26" r="5" fill="#0a72e0" />
              <path d="M44 38h8v37h-8z" fill="#0a72e0" />
            </svg>
            <DialogText>Datos exportados con éxito.</DialogText>
          </DialogBody>
          <DialogFooter><OkButton>OK</OkButton></DialogFooter>
        </Dialog>
      </Overlay>
    </>
  );
}
